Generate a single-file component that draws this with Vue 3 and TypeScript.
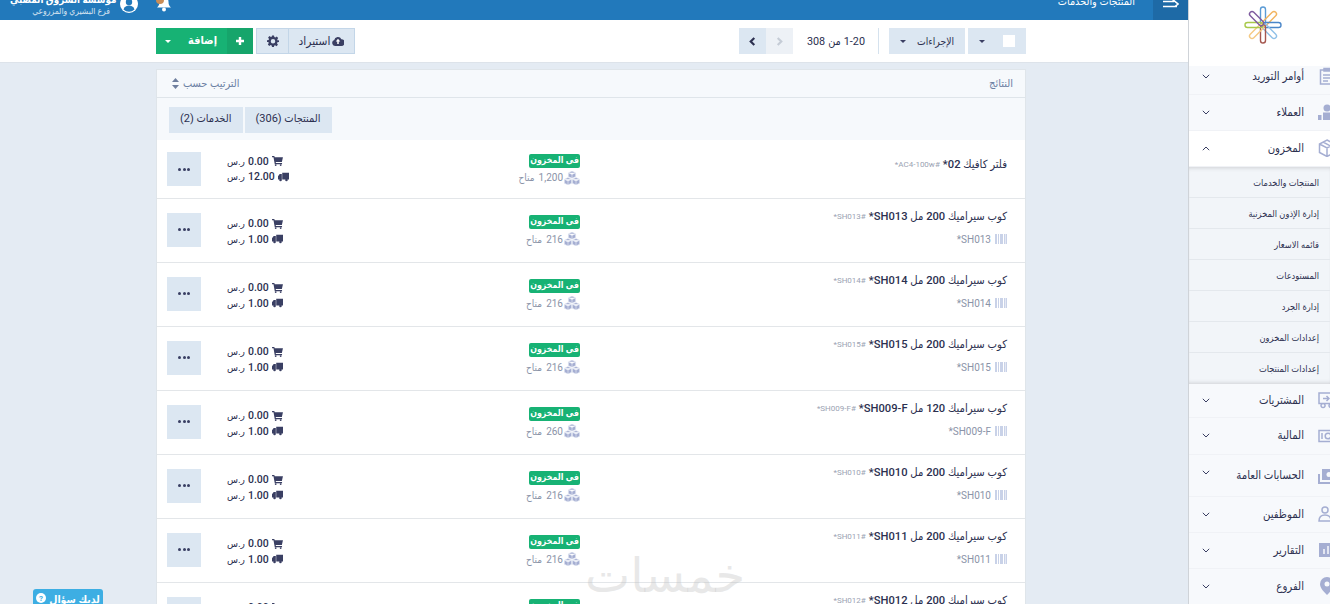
<script setup lang="ts">
interface Row { title: string; sku: string; code?: string; qty: string; cost: string }
const rows: Row[] = [
  { title: 'فلتر كافيك 02', sku: 'AC4-100w', qty: '1,200', cost: '12.00' },
  { title: 'كوب سيراميك 200 مل SH013', sku: 'SH013', code: 'SH013', qty: '216', cost: '1.00' },
  { title: 'كوب سيراميك 200 مل SH014', sku: 'SH014', code: 'SH014', qty: '216', cost: '1.00' },
  { title: 'كوب سيراميك 200 مل SH015', sku: 'SH015', code: 'SH015', qty: '216', cost: '1.00' },
  { title: 'كوب سيراميك 120 مل SH009-F', sku: 'SH009-F', code: 'SH009-F', qty: '260', cost: '1.00' },
  { title: 'كوب سيراميك 200 مل SH010', sku: 'SH010', code: 'SH010', qty: '216', cost: '1.00' },
  { title: 'كوب سيراميك 200 مل SH011', sku: 'SH011', code: 'SH011', qty: '216', cost: '1.00' },
  { title: 'كوب سيراميك 200 مل SH012', sku: 'SH012', code: 'SH012', qty: '216', cost: '1.00' }
]
const submenu = ['المنتجات والخدمات', 'إدارة الإذون المخزنية', 'قائمه الاسعار', 'المستودعات', 'إدارة الجرد', 'إعدادات المخزون', 'إعدادات المنتجات']
const clips = [
  { a: 0, c: '#5b9bd5' }, { a: 45, c: '#f2b45f' }, { a: 90, c: '#4a86c8' }, { a: 135, c: '#8fc0e8' },
  { a: 180, c: '#a5574f' }, { a: 225, c: '#f5c983' }, { a: 270, c: '#a8c94a' }, { a: 315, c: '#7d5a9e' }
]
</script>

<template>
  <div class="app">
    <div class="main">
      <header class="topbar">
        <div class="user">
          <div class="user-text">
            <div class="user-name">مؤسسة الشروق المصبي</div>
            <div class="user-branch">فرع البشيري والمزروعي</div>
          </div>
          <svg class="user-icon" viewBox="0 0 18 18"><circle cx="9" cy="9" r="9" fill="#fff"/><circle cx="9" cy="7" r="3.200" fill="#2279bb"/><path d="M3.500 14.500c1-3 3-4 5.500-4s4.500 1 5.500 4a8 8 0 0 1-11 0z" fill="#2279bb"/></svg>
          <svg class="bell" viewBox="0 0 18 16"><path d="M9 1c3 0 4.500 2 4.500 5 0 3 1 4 2.500 5.500H2C3.500 10 4.500 9 4.500 6 4.500 3 6 1 9 1z" fill="#fff"/><circle cx="9" cy="13.500" r="2" fill="#fff"/><circle cx="5" cy="4" r="4" fill="#c98d57"/></svg>
        </div>
        <div class="crumb">المنتجات والخدمات</div>
        <div class="collapse">
          <svg width="16" height="10" viewBox="0 0 16 10"><path d="M0 2.500h11M0 7.500h14M9 0l6 5-3 2.500" fill="none" stroke="#fff" stroke-width="1.600"/></svg>
        </div>
      </header>

      <div class="toolbar">
        <div class="tools">
          <div class="add">
            <span class="add-caret"><i class="caret white"></i></span>
            <span class="add-label">إضافة</span>
            <span class="add-plus">
              <svg width="10" height="10" viewBox="0 0 10 10"><path d="M5 1v8M1 5h8" stroke="#fff" stroke-width="2.400"/></svg>
            </span>
          </div>
          <button class="tool gear">
            <svg width="12" height="12" viewBox="0 0 24 24"><path fill="#3a3f63" d="M10 1h4l.7 3.200 2 .8 2.800-1.800 2.800 2.800-1.800 2.800.8 2L24 10.500v3.500l-3.200.7-.8 2 1.800 2.800-2.800 2.800-2.800-1.800-2 .8L14 24h-4l-.7-3.200-2-.8-2.800 1.800-2.800-2.800 1.800-2.800-.8-2L0 14v-3.500l3.200-.7.8-2L2.200 5l2.800-2.800L7.800 4l2-.8zM12 8a4.500 4.500 0 1 0 0 9 4.500 4.500 0 0 0 0-9z"/></svg>
          </button>
          <button class="tool import">
            <span>استيراد</span>
            <svg width="12" height="10" viewBox="0 0 16 13"><path fill="#3a3f63" d="M4 13a4 4 0 0 1-1-7.800A5 5 0 0 1 12.500 4 4.500 4.500 0 0 1 12 13z"/><path fill="#fff" d="M8 3.500 11 7H9v3.500H7V7H5z"/></svg>
          </button>
        </div>
        <div class="pager">
          <div class="pages">
            <button class="page-btn">
              <svg width="7" height="9" viewBox="0 0 7 10"><path d="M5.500 1l-4 4 4 4" fill="none" stroke="#2c3050" stroke-width="2.400"/></svg>
            </button>
            <button class="page-btn off">
              <svg width="7" height="9" viewBox="0 0 7 10"><path d="M1.500 1l4 4-4 4" fill="none" stroke="#c5ccd6" stroke-width="2.400"/></svg>
            </button>
          </div>
          <div class="count"><span>1-20</span><span>من</span><span>308</span></div>
          <div class="divider"></div>
          <button class="actions"><i class="caret"></i><span>الإجراءات</span></button>
          <div class="select"><i class="caret"></i><span class="check"></span></div>
        </div>
      </div>

      <section class="panel">
        <div class="panel-head">
          <div class="sort">
            <svg width="7" height="11" viewBox="0 0 7 11"><path fill="#6f7f9e" d="M3.500 0 7 4H0zM3.500 11 0 7h7z"/></svg>
            <span>الترتيب حسب</span>
          </div>
          <span class="results">النتائج</span>
        </div>
        <div class="tabs">
          <span class="tab">الخدمات (2)</span>
          <span class="tab">المنتجات (306)</span>
        </div>
        <div v-for="r in rows" :key="r.sku" class="row" :class="{ tall: r.code }">
          <button class="dots"><i></i><i></i><i></i></button>
          <div class="prices">
            <div class="price">
              <span class="cur">ر.س</span><b>0.00</b>
              <svg width="11" height="10" viewBox="0 0 12 11"><path fill="#3a3f63" d="M0 0h2.500l.4 1.500H12L10.800 6.500H4l.3 1.200h6.700V9H3L1.600 1.300H0z"/><circle cx="4" cy="10" r="1" fill="#3a3f63"/><circle cx="9.500" cy="10" r="1" fill="#3a3f63"/></svg>
            </div>
            <div class="price">
              <span class="cur">ر.س</span><b>{{ r.cost }}</b>
              <svg width="11" height="10" viewBox="0 0 13 10"><path fill="#3a3f63" d="M5 0h8v8H5zM0 4l2-2.500h2.500V8H0z"/><circle cx="3" cy="8.500" r="1.500" fill="#3a3f63"/><circle cx="10" cy="8.500" r="1.500" fill="#3a3f63"/></svg>
            </div>
          </div>
          <div class="stock">
            <span class="badge">في المخزون</span>
            <div class="qty">
              <span>متاح</span><span class="num">{{ r.qty }}</span>
              <svg width="16" height="14" viewBox="0 0 16 14"><g fill="#a5aed2" stroke="#eef1f8" stroke-width=".6"><path d="M8 0l3.700 1.700v4L8 7.300 4.300 5.700v-4zM4.300 1.700 8 3.400l3.700-1.700M8 3.400v3.900"/><path d="M4 6.500l3.700 1.700v4L4 14 .3 12.200v-4zM.3 8.200 4 9.900l3.700-1.700M4 9.900V14"/><path d="M12 6.500l3.700 1.700v4L12 14l-3.700-1.800v-4zM8.300 8.200 12 9.900l3.700-1.700M12 9.900V14"/></g></svg>
            </div>
          </div>
          <div class="info">
            <div class="title">
              <span class="sku">*{{ r.sku }}#</span>
              <b class="name">{{ r.title }}*</b>
            </div>
            <div v-if="r.code" class="code">
              <span>*{{ r.code }}</span>
              <svg width="12" height="10" viewBox="0 0 12 10"><path fill="#c9d2e8" d="M0 0h2v10H0zM3 0h1v10H3zM5 0h3v10H5zM9 0h1v10H9zM10.500 0H12v10h-1.500z"/></svg>
            </div>
          </div>
        </div>
      </section>

      <div class="watermark">خمسات</div>
      <button class="help">
        <svg width="10" height="10" viewBox="0 0 10 10"><circle cx="5" cy="5" r="5" fill="#fff"/><text x="5" y="8" font-size="8" font-weight="700" text-anchor="middle" fill="#3daee3" font-family="Roboto">?</text></svg>
        <span>لديك سؤال</span>
      </button>
    </div>

    <aside class="side">
      <div class="logo">
        <svg width="40" height="40" viewBox="-20 -20 40 40">
          <rect v-for="c in clips" :key="c.a" x="-2.500" y="-18" width="5" height="18" rx="2.500" fill="none" :stroke="c.c" stroke-width="1.400" :transform="`rotate(${c.a})`"/>
        </svg>
      </div>

      <div class="item first">
        <svg class="mi" viewBox="0 0 18 18"><path d="M2.500 3h13v14h-13z M6 1.500h6V4H6z M5 8h8M5 11h8M5 14h5" fill="none" stroke="#a5aed2" stroke-width="1.500"/></svg>
        <span class="label">أوامر التوريد</span>
        <svg class="chev" viewBox="0 0 8 5"><path d="M.8.800 4 4 7.200.800" fill="none" stroke="#3a3f63" stroke-width="1"/></svg>
      </div>
      <div class="item">
        <svg class="mi" viewBox="0 0 18 18"><g fill="#a5aed2"><circle cx="9" cy="5" r="3.500"/><path d="M0 17v-5h3.500v5zM5 17V9.500h8V17zM14.500 17v-5H18v5z"/></g></svg>
        <span class="label">العملاء</span>
        <svg class="chev" viewBox="0 0 8 5"><path d="M.8.800 4 4 7.200.800" fill="none" stroke="#3a3f63" stroke-width="1"/></svg>
      </div>
      <div class="item open">
        <svg class="mi" viewBox="0 0 18 18"><path d="M9 1l7.500 4v8.500L9 17.500 1.500 13.500V5zM1.500 5 9 9l7.500-4M9 9v8.500M5 3l7.500 4" fill="none" stroke="#a5aed2" stroke-width="1.500"/></svg>
        <span class="label">المخزون</span>
        <svg class="chev" viewBox="0 0 8 5"><path d="M.8 4.200 4 1l3.200 3.200" fill="none" stroke="#3a3f63" stroke-width="1"/></svg>
      </div>
      <div class="sub">
        <div v-for="s in submenu" :key="s" class="sub-item">{{ s }}</div>
      </div>
      <div class="item after-sub">
        <svg class="mi" viewBox="0 0 18 18"><path d="M1 2h16v10.500H1zM5 12.500a2 2 0 1 0 .1 0M13 12.500a2 2 0 1 0 .1 0M5 7.500h6M8.500 5l2.500 2.500L8.500 10" fill="none" stroke="#a5aed2" stroke-width="1.500"/></svg>
        <span class="label">المشتريات</span>
        <svg class="chev" viewBox="0 0 8 5"><path d="M.8.800 4 4 7.200.800" fill="none" stroke="#3a3f63" stroke-width="1"/></svg>
      </div>
      <div class="item middle">
        <svg class="mi" viewBox="0 0 18 18"><path d="M1 3.500h17v11H1z" fill="none" stroke="#a5aed2" stroke-width="1.500"/><circle cx="10" cy="9" r="2.800" fill="none" stroke="#a5aed2" stroke-width="1.500"/><path d="M4 6v6" stroke="#a5aed2" stroke-width="1.500"/></svg>
        <span class="label">المالية</span>
        <svg class="chev" viewBox="0 0 8 5"><path d="M.8.800 4 4 7.200.800" fill="none" stroke="#3a3f63" stroke-width="1"/></svg>
      </div>
      <div class="item wide">
        <svg class="mi" viewBox="0 0 18 18"><path d="M1 8v9h16" fill="none" stroke="#a5aed2" stroke-width="2"/><path fill="#a5aed2" d="M4 3h14v11H4z"/><circle cx="11" cy="8.500" r="2.500" fill="#f7f9fc"/></svg>
        <span class="label">الحسابات العامة</span>
        <svg class="chev up" viewBox="0 0 8 5"><path d="M.8.800 4 4 7.200.800" fill="none" stroke="#3a3f63" stroke-width="1"/></svg>
      </div>
      <div class="item">
        <svg class="mi" viewBox="0 0 18 18"><circle cx="7" cy="5" r="3" fill="none" stroke="#a5aed2" stroke-width="1.500"/><circle cx="15" cy="5" r="3" fill="#a5aed2"/><path d="M1 16c0-5 3-6 6-6s6 1 6 6z" fill="none" stroke="#a5aed2" stroke-width="1.500"/></svg>
        <span class="label">الموظفين</span>
        <svg class="chev" viewBox="0 0 8 5"><path d="M.8.800 4 4 7.200.800" fill="none" stroke="#3a3f63" stroke-width="1"/></svg>
      </div>
      <div class="item">
        <svg class="mi" viewBox="0 0 18 18"><path fill="#a5aed2" d="M1 2h17v14H1z"/><path d="M6 13V8M10 13V5M14 13v-3" stroke="#f7f9fc" stroke-width="1.500"/></svg>
        <span class="label">التقارير</span>
        <svg class="chev" viewBox="0 0 8 5"><path d="M.8.800 4 4 7.200.800" fill="none" stroke="#3a3f63" stroke-width="1"/></svg>
      </div>
      <div class="item">
        <svg class="mi" viewBox="0 0 18 18"><path fill="#a5aed2" d="M9 0a7 7 0 0 1 7 7c0 4-4 8-7 11-3-3-7-7-7-11a7 7 0 0 1 7-7z"/><circle cx="9" cy="7" r="2.500" fill="#f7f9fc"/></svg>
        <span class="label">الفروع</span>
        <svg class="chev" viewBox="0 0 8 5"><path d="M.8.800 4 4 7.200.800" fill="none" stroke="#3a3f63" stroke-width="1"/></svg>
      </div>
    </aside>
  </div>
</template>

<style scoped>
.app {
  display: flex;
  width: 1330px;
  height: 604px;
  overflow: hidden;
  background: #e4ebf3;
  color: #2c3050;
  font-family: Roboto, "DejaVu Sans Condensed", sans-serif;
  font-size: 12px;
}
button { border: 0; padding: 0; font: inherit; color: inherit; }
.main { position: relative; flex: 1; min-width: 0; }

.topbar {
  display: flex;
  align-items: flex-end;
  height: 20px;
  background: #2279bb;
  color: #fff;
  overflow: hidden;
}
.user { display: flex; align-items: flex-end; padding-left: 10px; padding-bottom: 3px; flex: 1; }
.user-text { text-align: right; width: 100px; flex: none; }
.user-name { font-size: 9.800px; font-weight: 700; line-height: 11px; white-space: nowrap; }
.user-branch { font-size: 8.500px; line-height: 12px; opacity: .8; white-space: nowrap; }
.user-icon { width: 18px; height: 18px; margin: 0 0 4px 10px; flex: none; }
.bell { width: 18px; height: 16px; margin: 0 0 5px 17px; flex: none; }
.crumb { font-size: 10.800px; line-height: 12px; padding-bottom: 12px; margin-right: 18px; white-space: nowrap; }
.collapse {
  width: 35px;
  height: 20px;
  background: #1e6aa6;
  display: flex;
  align-items: flex-end;
  justify-content: center;
  padding-bottom: 11px;
  box-sizing: border-box;
}

.toolbar {
  display: flex;
  justify-content: space-between;
  align-items: center;
  height: 42px;
  padding: 0 162px 0 156px;
  background: #fff;
  border-bottom: 1px solid #dde3ea;
}
.tools, .pager, .pages { display: flex; align-items: center; }
.add { display: flex; height: 26px; width: 97px; background: #17b274; color: #fff; font-weight: 700; font-size: 11px; }
.add-caret { width: 24px; display: flex; align-items: center; justify-content: center; }
.add-label { flex: 1; text-align: center; line-height: 25px; padding-right: 2px; }
.add-plus { width: 26px; background: #16a56b; display: flex; align-items: center; justify-content: center; }
.tool {
  height: 26px;
  background: #dce7f2;
  border: 1px solid #c3d6e8;
  box-sizing: border-box;
  display: flex;
  align-items: center;
  justify-content: center;
  gap: 2px;
  font-size: 11.800px;
}
.gear { width: 33px; margin-left: 3px; }
.import { width: 67px; margin-left: -1px; }
.page-btn { width: 27px; height: 26px; background: #dce7f2; display: flex; align-items: center; justify-content: center; }
.page-btn.off { background: #edf1f6; }
.count { display: flex; gap: 3px; width: 59px; margin: 0 13px; justify-content: flex-start; white-space: nowrap; font-size: 10.800px; flex-direction: row-reverse; }
.divider { width: 1px; height: 26px; background: #d5e2ee; margin-right: 10px; }
.actions { display: flex; align-items: center; justify-content: space-between; width: 76px; height: 26px; padding: 0 11px; box-sizing: border-box; background: #dce7f2; font-size: 10.300px; }
.select { display: flex; align-items: center; justify-content: space-between; width: 58px; height: 26px; margin-left: 3px; padding: 0 11px; box-sizing: border-box; background: #dce7f2; }
.check { width: 12px; height: 12px; background: #fff; }
.caret { display: block; width: 0; height: 0; border: 3px solid transparent; border-top: 3.500px solid #3a3f63; border-bottom: 0; }
.caret.white { border-top-color: #fff; }

.panel {
  width: 870px;
  margin: 6px 0 0 156px;
  box-sizing: border-box;
  background: #fff;
  border: 1px solid #dfe5ea;
  border-width: 1px 1px 0;
}
.panel-head {
  display: flex;
  justify-content: space-between;
  align-items: center;
  height: 28px;
  padding: 0 12px 0 15px;
  background: #f6f9fc;
  border-bottom: 1px solid #dfe5ea;
  color: #6b80a3;
  font-size: 11px;
  box-sizing: border-box;
}
.sort { display: flex; align-items: center; gap: 4px; font-size: 10.900px; }
.tabs {
  display: flex;
  gap: 2px;
  height: 42px;
  padding: 9px 12px 7px;
  box-sizing: border-box;
  background: #f6f9fc;
}
.tab { display: flex; align-items: center; padding: 0 11px 3px; background: #dce7f2; font-size: 11px; }

.row {
  display: flex;
  align-items: center;
  height: 59px;
  padding: 0 18px 0 10px;
  box-sizing: border-box;
  border-bottom: 1px solid #e3e6e9;
}
.row.tall { height: 64px; }
.row.tall .dots { margin-top: -2px; }
.row.tall .prices { margin-top: 2px; }
.dots { display: flex; align-items: center; justify-content: center; gap: 1.500px; width: 34px; height: 34px; flex: none; background: #dce7f2; }
.dots i { width: 3px; height: 3px; background: #3a3f63; border-radius: 50%; }
.prices { width: 53px; margin-left: 26px; flex: none; }
.price { display: flex; align-items: center; justify-content: flex-start; gap: 3px; height: 15.500px; font-size: 10.500px; white-space: nowrap; }
.price svg { flex: none; }
.price .cur { font-size: 10px; width: 18px; }
.price b { font-weight: 500; }
.stock { width: 52px; margin-left: 248px; flex: none; display: flex; flex-direction: column; align-items: flex-end; }
.badge { width: 51px; height: 14px; border-radius: 2px; background: #17b274; color: #fff; font-size: 8.800px; font-weight: 700; line-height: 13px; text-align: center; margin: 1px 0 2px; white-space: nowrap; }
.qty { display: flex; align-items: center; gap: 1px; color: #8a93a8; font-size: 10px; white-space: nowrap; height: 16px; }
.qty .num { margin: 0 0 0 3px; }
.qty svg { flex: none; }
.info { flex: 1; text-align: right; padding-bottom: 6px; }
.row:not(.tall) .info { padding-bottom: 10px; }
.title { display: flex; justify-content: flex-end; align-items: center; gap: 3px; height: 16px; white-space: nowrap; }
.name { font-weight: 500; font-size: 11.200px; color: #2c3050; direction: rtl; }
.sku { font-size: 8px; color: #9ba3b3; }
.code { display: flex; justify-content: flex-end; align-items: center; gap: 4px; margin-top: 7px; height: 16px; font-size: 10px; color: #8a93a8; }

.watermark { position: absolute; left: 585px; top: 545px; width: 160px; text-align: center; font-size: 48px; line-height: 60px; color: rgba(190, 190, 190, .35); font-family: "DejaVu Sans", sans-serif; pointer-events: none; }
.help { position: absolute; left: 33px; top: 589px; width: 70px; height: 22px; display: flex; align-items: flex-start; justify-content: center; gap: 3px; padding-top: 4px; box-sizing: border-box; background: #3daee3; color: #fff; border-radius: 3px 3px 0 0; font-size: 10.500px; font-weight: 700; }

.side {
  width: 142px;
  flex: none;
  overflow: hidden;
  background: #f7f9fc;
  border-left: 1px solid #cfd3d8;
  box-sizing: border-box;
  direction: rtl;
  font-size: 11.300px;
}
.logo { height: 66px; background: #fff; display: flex; align-items: center; justify-content: center; padding-left: 7px; box-sizing: border-box; }
.logo svg { margin-top: -16px; }
.item {
  display: flex;
  align-items: center;
  height: 36px;
  padding-left: 13px;
  padding-bottom: 1px;
  border-bottom: 1px solid #f0f2f6;
  box-sizing: border-box;
}
.item.first { height: 29px; padding-bottom: 8px; }
.item.open { background: #fff; }
.item.after-sub { height: 34px; }
.item.middle { height: 37px; }
.item.wide { height: 42px; }
.item.wide .chev.up { margin-top: -6px; }
.mi { width: 18px; height: 18px; flex: none; margin-right: -6px; margin-left: 14px; }
.label { flex: 1; font-weight: 500; white-space: nowrap; color: #2c3050; }
.chev { width: 8px; height: 5px; flex: none; }
.sub { background: #f2f5f9; box-shadow: inset 0 4px 4px -3px rgba(0,0,0,.15), inset 0 -4px 4px -3px rgba(0,0,0,.15); }
.sub-item { height: 31px; line-height: 32px; padding-right: 11px; border-bottom: 1px solid #e4e8ed; font-size: 9.200px; white-space: nowrap; box-sizing: border-box; }
.sub-item:last-child { border-bottom: 0; }
</style>
